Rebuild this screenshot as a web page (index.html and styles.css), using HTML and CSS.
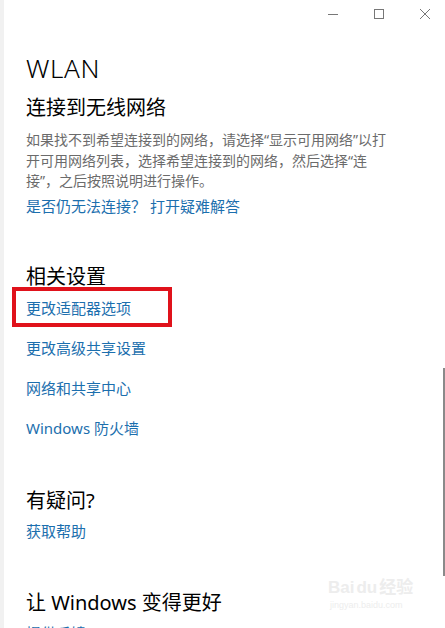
FILE: index.html
```html
<!DOCTYPE html>
<html lang="zh-CN">
<head>
  <meta charset="UTF-8">
  <meta name="viewport" content="width=device-width, initial-scale=1.0">
  <title>WLAN</title>
  <link rel="stylesheet" href="styles.css">
</head>
<body>
  <div class="window">
    <div class="titlebar">
      <span class="ctrl ctrl-min">
        <svg width="12" height="12" viewBox="0 0 12 12"><path d="M1 6.5h10" stroke="#777" stroke-width="1"/></svg>
      </span>
      <span class="ctrl ctrl-max">
        <svg width="12" height="12" viewBox="0 0 12 12"><rect x="1.5" y="1.5" width="9" height="9" fill="none" stroke="#777" stroke-width="1"/></svg>
      </span>
      <span class="ctrl ctrl-close">
        <svg width="12" height="12" viewBox="0 0 12 12"><path d="M1 1l10 10M11 1L1 11" stroke="#777" stroke-width="1"/></svg>
      </span>
    </div>

    <div class="content">
      <h1 class="page-title">WLAN</h1>
      <h2 class="sub-title">连接到无线网络</h2>
      <p class="desc">如果找不到希望连接到的网络，请选择“显示可用网络”以打<br>开可用网络列表，选择希望连接到的网络，然后选择“连<br>接”，之后按照说明进行操作。</p>
      <a class="link link-inline" href="#">是否仍无法连接？ 打开疑难解答</a>

      <h2 class="section-title">相关设置</h2>
      <ul class="link-list">
        <li class="marked"><a class="link" href="#">更改适配器选项</a><span class="mark-box"></span></li>
        <li><a class="link" href="#">更改高级共享设置</a></li>
        <li><a class="link" href="#">网络和共享中心</a></li>
        <li><a class="link" href="#">Windows 防火墙</a></li>
      </ul>

      <h2 class="section-title section-help">有疑问?</h2>
      <a class="link link-help" href="#">获取帮助</a>

      <h2 class="section-title section-better">让 Windows 变得更好</h2>
      <a class="link link-feedback" href="#">提供反馈</a>
    </div>

    <div class="scroll-thumb"></div>
    <div class="watermark">
      <span class="wm-main">Bai<span class="wm-du">du</span>经验</span>
      <span class="wm-url">jingyan.baidu.com</span>
    </div>
  </div>
</body>
</html>
```

FILE: styles.css
```css
* {
  box-sizing: border-box;
  margin: 0;
  padding: 0;
}
body {
  background: #ffffff;
  font-family: 'Noto Sans', 'Noto Sans CJK SC', sans-serif;
  color: #000;
  overflow: hidden;
}
.window {
  position: relative;
  width: 445px;
  height: 628px;
  border-left: 4px solid #f1f1f1;
  overflow: hidden;
}
.titlebar {
  height: 32px;
  display: flex;
  justify-content: flex-end;
  align-items: flex-start;
  padding-top: 8px;
  padding-right: 14px;
  gap: 34px;
}
.ctrl {
  display: flex;
  width: 12px;
  height: 12px;
}
.content {
  padding-left: 22px;
}
.page-title {
  margin-top: 18px;
  font-size: 26px;
  font-weight: 300;
  line-height: 36px;
  letter-spacing: 0.6px;
}
.sub-title {
  margin-top: 8px;
  font-size: 20px;
  font-weight: 400;
  line-height: 28px;
}
.desc {
  margin-top: 8px;
  font-size: 14px;
  line-height: 20.5px;
  color: #6b6b6b;
}
.link {
  display: block;
  font-size: 15px;
  line-height: 20px;
  color: #1c6fae;
  text-decoration: none;
}
.link-inline {
  margin-top: 4px;
}
.section-title {
  margin-top: 48px;
  font-size: 20px;
  font-weight: 400;
  line-height: 26px;
}
.link-list {
  list-style: none;
  margin-top: -2px;
}
.link-list li {
  position: relative;
  height: 40px;
  display: flex;
  align-items: center;
}
.mark-box {
  position: absolute;
  left: -14px;
  top: -1px;
  width: 160px;
  height: 40px;
  border: 4px solid #e0121b;
}
.section-help {
  margin-top: 40px;
}
.link-help {
  margin-top: 7px;
}
.section-better {
  margin-top: 49px;
}
.link-feedback {
  margin-top: 7px;
}
.scroll-thumb {
  position: absolute;
  right: 0;
  top: 368px;
  width: 2px;
  height: 208px;
  background: #8a8a8a;
}
.watermark {
  position: absolute;
  left: 324px;
  top: 578px;
  display: flex;
  flex-direction: column;
  color: #ededed;
  font-family: 'Liberation Sans', 'Noto Sans CJK SC', sans-serif;
}
.wm-main {
  font-size: 17px;
  font-weight: 700;
  line-height: 20px;
}
.wm-du {
  margin: 0 2px;
}
.wm-url {
  font-size: 9px;
  line-height: 14px;
  padding-left: 2px;
}
```
